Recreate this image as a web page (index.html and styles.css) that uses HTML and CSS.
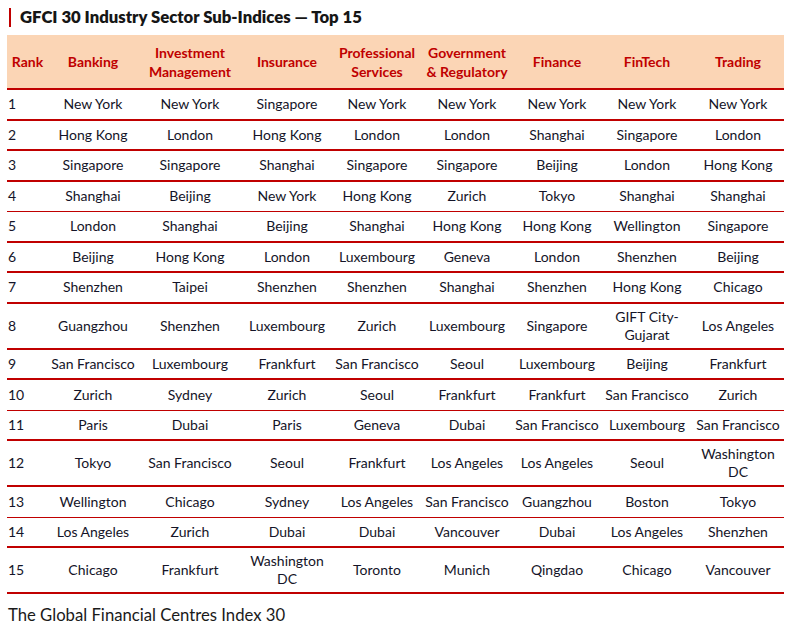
FILE: index.html
```html
<!DOCTYPE html>
<html lang="en">
<head>
<meta charset="utf-8">
<title>GFCI 30 Industry Sector Sub-Indices — Top 15</title>
<link rel="stylesheet" href="styles.css">
</head>
<body>
<div class="page">
  <h1 class="title">GFCI 30 Industry Sector Sub-Indices — Top 15</h1>
  <table class="ranks">
    <colgroup>
      <col class="c-rank"><col class="c-std"><col class="c-wide"><col class="c-std"><col class="c-std"><col class="c-std"><col class="c-std"><col class="c-std"><col class="c-last">
    </colgroup>
    <thead>
      <tr>
        <th>Rank</th><th>Banking</th><th>Investment<br>Management</th><th>Insurance</th><th>Professional<br>Services</th><th>Government<br>&amp; Regulatory</th><th>Finance</th><th>FinTech</th><th>Trading</th>
      </tr>
    </thead>
    <tbody>
      <tr><td>1</td><td>New York</td><td>New York</td><td>Singapore</td><td>New York</td><td>New York</td><td>New York</td><td>New York</td><td>New York</td></tr>
      <tr><td>2</td><td>Hong Kong</td><td>London</td><td>Hong Kong</td><td>London</td><td>London</td><td>Shanghai</td><td>Singapore</td><td>London</td></tr>
      <tr><td>3</td><td>Singapore</td><td>Singapore</td><td>Shanghai</td><td>Singapore</td><td>Singapore</td><td>Beijing</td><td>London</td><td>Hong Kong</td></tr>
      <tr class="thin"><td>4</td><td>Shanghai</td><td>Beijing</td><td>New York</td><td>Hong Kong</td><td>Zurich</td><td>Tokyo</td><td>Shanghai</td><td>Shanghai</td></tr>
      <tr><td>5</td><td>London</td><td>Shanghai</td><td>Beijing</td><td>Shanghai</td><td>Hong Kong</td><td>Hong Kong</td><td>Wellington</td><td>Singapore</td></tr>
      <tr><td>6</td><td>Beijing</td><td>Hong Kong</td><td>London</td><td>Luxembourg</td><td>Geneva</td><td>London</td><td>Shenzhen</td><td>Beijing</td></tr>
      <tr><td>7</td><td>Shenzhen</td><td>Taipei</td><td>Shenzhen</td><td>Shenzhen</td><td>Shanghai</td><td>Shenzhen</td><td>Hong Kong</td><td>Chicago</td></tr>
      <tr><td>8</td><td>Guangzhou</td><td>Shenzhen</td><td>Luxembourg</td><td>Zurich</td><td>Luxembourg</td><td>Singapore</td><td>GIFT City-<br>Gujarat</td><td>Los Angeles</td></tr>
      <tr><td>9</td><td>San Francisco</td><td>Luxembourg</td><td>Frankfurt</td><td>San Francisco</td><td>Seoul</td><td>Luxembourg</td><td>Beijing</td><td>Frankfurt</td></tr>
      <tr class="thin"><td>10</td><td>Zurich</td><td>Sydney</td><td>Zurich</td><td>Seoul</td><td>Frankfurt</td><td>Frankfurt</td><td>San Francisco</td><td>Zurich</td></tr>
      <tr><td>11</td><td>Paris</td><td>Dubai</td><td>Paris</td><td>Geneva</td><td>Dubai</td><td>San Francisco</td><td>Luxembourg</td><td>San Francisco</td></tr>
      <tr><td>12</td><td>Tokyo</td><td>San Francisco</td><td>Seoul</td><td>Frankfurt</td><td>Los Angeles</td><td>Los Angeles</td><td>Seoul</td><td>Washington<br>DC</td></tr>
      <tr class="thin"><td>13</td><td>Wellington</td><td>Chicago</td><td>Sydney</td><td>Los Angeles</td><td>San Francisco</td><td>Guangzhou</td><td>Boston</td><td>Tokyo</td></tr>
      <tr><td>14</td><td>Los Angeles</td><td>Zurich</td><td>Dubai</td><td>Dubai</td><td>Vancouver</td><td>Dubai</td><td>Los Angeles</td><td>Shenzhen</td></tr>
      <tr><td>15</td><td>Chicago</td><td>Frankfurt</td><td>Washington<br>DC</td><td>Toronto</td><td>Munich</td><td>Qingdao</td><td>Chicago</td><td>Vancouver</td></tr>
    </tbody>
  </table>
  <p class="source">The Global Financial Centres Index 30</p>
</div>
</body>
</html>
```

FILE: styles.css
```css
html, body {
  margin: 0;
  padding: 0;
  background: #ffffff;
}

.page {
  font-family: Lato, "Open Sans", sans-serif;
  color: #141428;
  padding: 8px 6px 0 7px;
}

.title {
  margin: 0 0 8px 2px;
  padding-left: 9px;
  border-left: 2px solid #c00000;
  font-size: 16.7px;
  line-height: 19px;
  font-weight: 800;
  color: #161616;
}

.ranks {
  width: 777px;
  table-layout: fixed;
  border-collapse: separate;
  border-spacing: 0;
  font-size: 14px;
}

.c-rank { width: 41px; }
.c-std { width: 90px; }
.c-wide { width: 104px; }
.c-last { width: 92px; }

.ranks th {
  background: #fbd5b5;
  color: #c00000;
  font-weight: 700;
  font-size: 14px;
  line-height: 19px;
  height: 55px;
  box-sizing: border-box;
  padding: 0 2px;
  text-align: center;
  vertical-align: middle;
  border-bottom: 2px solid #c00000;
  white-space: nowrap;
}

.ranks td {
  height: 30.5px;
  box-sizing: border-box;
  padding: 4px 1px;
  line-height: 18px;
  text-align: center;
  vertical-align: middle;
  border-bottom: 2px solid #c00000;
  white-space: nowrap;
}

.ranks td:first-child {
  text-align: left;
}

.ranks tr.thin td {
  border-bottom-width: 1px;
}

.source {
  margin: 10px 0 0 1px;
  font-size: 16.7px;
  line-height: 22px;
  color: #1a1a1a;
}
```
